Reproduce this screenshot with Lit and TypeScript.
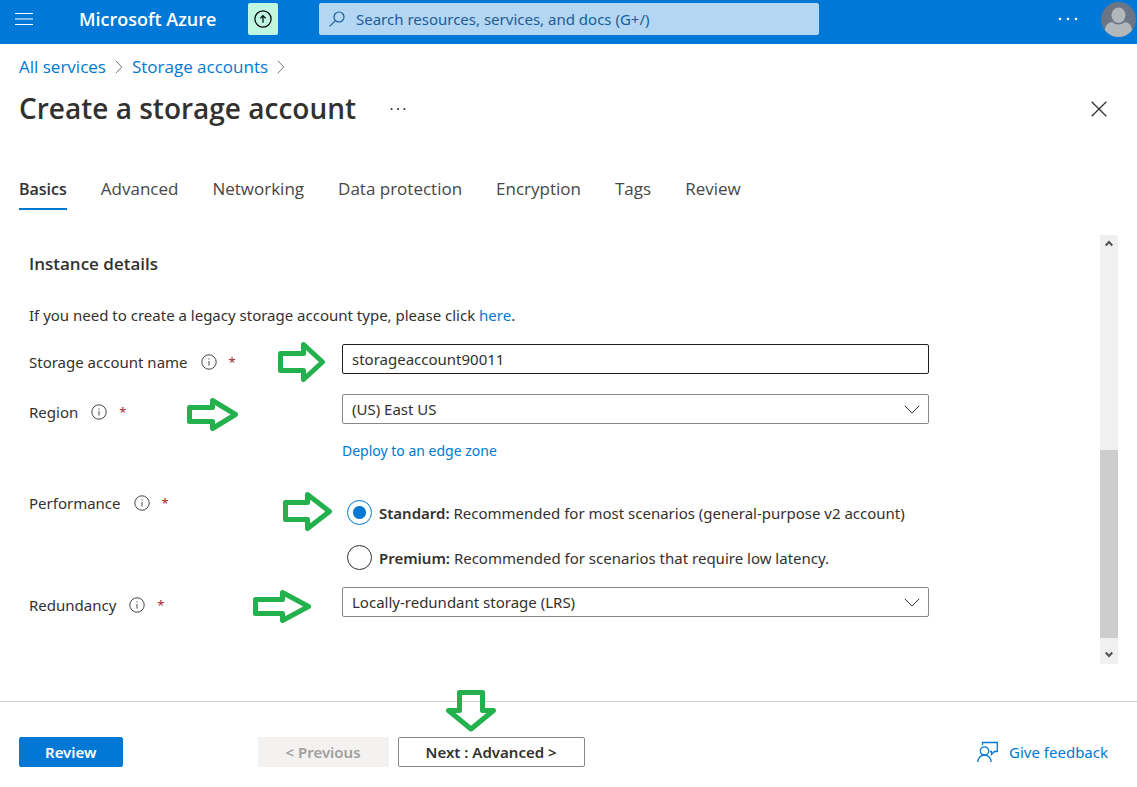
import { LitElement, html, css, svg } from "lit";
import { customElement, state } from "lit/decorators.js";
import { classMap } from "lit/directives/class-map.js";

const TABS = ["Basics", "Advanced", "Networking", "Data protection", "Encryption", "Tags", "Review"];

const crumbChevron = html`<svg class="crumb-chevron" viewBox="0 0 8 14" aria-hidden="true">
  <path d="M0.8 0.8 L6.8 7 L0.8 13.2" /></svg>`;

const selectChevron = html`<svg class="select-chevron" viewBox="0 0 16 9" aria-hidden="true">
  <path d="M0.8 0.8 L8 8 L15.2 0.8" /></svg>`;

const infoIcon = html`<svg class="info" viewBox="0 0 16 16" role="img" aria-label="Info">
  <circle cx="8" cy="8" r="7.2" /><path d="M8 7 V11.6" /><path d="M8 4.4 V5.6" /></svg>`;

const arrow = (name: string, width: number, height: number, points: string) => html`
  <svg class="arrow ${name}" width=${width} height=${height} viewBox="0 0 ${width} ${height}" aria-hidden="true">
    ${svg`<polygon points=${points} />`}
  </svg>`;

@customElement("app-root")
export class AppRoot extends LitElement {
  @state() private tab = "Basics";
  @state() private performance = "standard";

  static styles = css`
    :host {
      display: flex;
      flex-direction: column;
      min-height: 100vh;
      background: #fff;
      color: #323130;
      font-family: "Noto Sans", "Open Sans", sans-serif;
      font-size: 15px;
      line-height: 24px;
    }
    * { box-sizing: border-box; }
    button, input, select { font: inherit; color: inherit; margin: 0; }
    button { cursor: pointer; }
    a { color: #0078d4; text-decoration: none; }
    svg { display: block; flex: none; fill: none; stroke: currentColor; }
    .icon-button { display: flex; padding: 0; border: 0; background: none; }
    .brand, .crumbs, .title, .tabs, h2 { font-family: "Open Sans", "Noto Sans", sans-serif; }

    .topbar {
      display: flex;
      align-items: center;
      padding: 0 0 6px 15px;
      height: 44px;
      background: #0078d7;
      color: #fff;
    }
    .menu svg { width: 18px; height: 14px; }
    .brand { margin-left: 46px; width: 169px; color: #fff; font-size: 18px; font-weight: 600; white-space: nowrap; }
    .upgrade {
      align-items: center;
      justify-content: center;
      width: 30px;
      height: 32px;
      border-radius: 2px;
      background: #bff7e3;
      color: #000;
    }
    .upgrade svg { width: 18px; height: 18px; stroke-width: 1.2; }
    .search {
      display: flex;
      align-items: center;
      gap: 11px;
      flex: 0 1 500px;
      min-width: 0;
      height: 32px;
      margin-left: 41px;
      padding: 0 10px;
      border-radius: 2px;
      background: #b3d7f3;
      color: #1b5c97;
    }
    .search svg { width: 16px; height: 16px; stroke-width: 1.2; }
    .search input { flex: 1; min-width: 0; border: 0; padding: 0; background: none; outline: none; }
    .search input::placeholder { color: inherit; opacity: 1; }
    .topbar .more { margin-left: auto; }
    .more svg { width: 20px; height: 4px; fill: currentColor; stroke: none; }
    .avatar { margin: 1px 1px 0 23px; }
    .avatar svg { width: 35px; height: 35px; stroke: none; }

    .crumbs { display: flex; align-items: center; gap: 9px; padding: 11px 19px 0; font-size: 17px; }
    .crumb-chevron { width: 8px; height: 14px; color: #767676; }
    .title { display: flex; align-items: center; padding: 9px 30px 0 19px; }
    h1 { margin: 0; font-size: 28px; line-height: 40px; font-weight: 600; }
    .title .icon-button { padding-top: 2px; }
    .title .more { margin-left: 34px; }
    .title .more svg { width: 16px; }
    .title .close { margin-left: auto; }
    .close svg { width: 16px; height: 16px; stroke-width: 1.3; }

    .tabs { display: flex; gap: 34px; padding: 45px 19px 0; font-size: 17px; }
    .tab { padding: 4px 0 7px; border: 0; border-bottom: 2px solid transparent; background: none; color: #484644; white-space: nowrap; }
    .tab.active { border-color: #0078d4; color: #323130; font-size: 16px; font-weight: 600; }

    .pane { flex: 1; display: flex; margin: 25px 19px 37px 29px; }
    .form { flex: 1; min-width: 0; padding-top: 17px; }
    h2 { margin: 0 0 27px; font-size: 17px; line-height: 24px; font-weight: 600; }
    p { margin: 0 0 17px; }
    .row { position: relative; display: grid; grid-template-columns: 313px minmax(0, 587px); margin-bottom: 14px; }
    .label { display: flex; align-items: center; height: 36px; }
    .info { width: 16px; height: 16px; margin: 0 12px 0 13px; color: #484644; }
    .required { color: #a4262c; font-size: 13px; }
    .box { width: 100%; height: 30px; padding: 0 9px; border: 1px solid #8a8886; border-radius: 2px; background: #fff; color: #323130; }
    .name-box { border-color: #201f1e; }
    .select { position: relative; }
    .select select { appearance: none; display: block; }
    .select-chevron { position: absolute; right: 9px; top: 11px; width: 16px; height: 9px; pointer-events: none; }
    .edge { display: block; width: fit-content; margin-top: 15px; font-size: 14px; }
    .performance { margin-top: 22px; margin-bottom: 17px; }
    .options { display: grid; gap: 20px; padding: 15px 0 0 5px; }
    .option { display: flex; align-items: center; gap: 7px; min-height: 25px; }
    .option input { appearance: none; flex: none; width: 25px; height: 25px; border: 1px solid #323130; border-radius: 50%; background: #fff; }
    .option input:checked { border-color: #0078d4; background: radial-gradient(circle, #0078d4 6px, #fff 7px); }
    b { font-weight: 600; }

    .scrollbar { display: flex; flex-direction: column; width: 18px; background: #f0f0f0; color: #505050; }
    .scrollbar button { justify-content: center; height: 26px; padding-top: 5px; color: inherit; }
    .scrollbar .down { padding-top: 13px; }
    .scrollbar svg { width: 8px; height: 7px; stroke-width: 2; }
    .track { flex: 1; }
    .thumb { flex: 1; background: #cdcdcd; }

    .footer { position: relative; display: flex; align-items: center; padding: 35px 29px 20px 19px; border-top: 1px solid #d2d0ce; }
    .button { height: 30px; padding: 0 25px; border: 1px solid #8a8886; border-radius: 2px; background: #fff; font-weight: 600; line-height: 24px; white-space: nowrap; }
    .primary { border-color: #0078d4; background: #0078d4; color: #fff; }
    .step { padding: 0 27px; }
    .previous { margin-left: 135px; margin-right: 9px; border-color: #f3f2f1; background: #f3f2f1; color: #a19f9d; }
    .feedback { display: flex; align-items: center; gap: 10px; margin-left: auto; }
    .feedback svg { width: 22px; height: 22px; stroke-width: 1.3; }

    .arrow { position: absolute; stroke: #22b14c; stroke-width: 5; stroke-linejoin: round; pointer-events: none; z-index: 1; }
    .to-name { left: 249px; top: -2px; }
    .to-region { left: 158px; top: 4px; }
    .to-performance { left: 254px; top: 7px; }
    .to-redundancy { left: 224px; top: 3px; }
    .to-next { left: 445px; top: -13px; }
  `;

  private label(text: string, id: string) {
    return html`<div class="label"><label for=${id}>${text}</label>${infoIcon}<span class="required">*</span></div>`;
  }

  private option(value: string, name: string, note: string) {
    return html`<label class="option">
      <input type="radio" name="performance" id=${value} .checked=${this.performance === value}
        @change=${() => (this.performance = value)} />
      <span><b>${name}:</b> ${note}</span>
    </label>`;
  }

  private dots() {
    return html`<svg viewBox="0 0 20 4" aria-hidden="true">
      <circle cx="2" cy="2" r="1.3" /><circle cx="10" cy="2" r="1.3" /><circle cx="18" cy="2" r="1.3" /></svg>`;
  }

  render() {
    return html`
      <header class="topbar">
        <button class="icon-button menu" aria-label="Menu">
          <svg viewBox="0 0 18 14" stroke="#fff"><path d="M0 1.5H18M0 7H18M0 12.5H18" /></svg>
        </button>
        <a class="brand" href="#">Microsoft Azure</a>
        <button class="icon-button upgrade" aria-label="Upgrade">
          <svg viewBox="0 0 18 18"><circle cx="9" cy="9" r="8.1" /><path d="M9 12.800V6M6.300 8.400L9 5.700L11.700 8.400" /></svg>
        </button>
        <label class="search">
          <svg viewBox="0 0 16 16" aria-hidden="true"><circle cx="10" cy="6" r="5" /><path d="M6.4 9.6L0.6 15.4" /></svg>
          <input type="search" aria-label="Search" placeholder="Search resources, services, and docs (G+/)" />
        </label>
        <button class="icon-button more" aria-label="More">${this.dots()}</button>
        <button class="icon-button avatar" aria-label="Account">
          <svg viewBox="0 0 35 35">
            <clipPath id="disc"><circle cx="17.5" cy="17.5" r="17.5" /></clipPath>
            <g clip-path="url(#disc)">
              <rect width="35" height="35" fill="#6b7585" />
              <path d="M4 36V27Q5 21 11 20Q17.500 25 24 20Q30 21 31 27V36Z" fill="#b1b7bb" />
              <ellipse cx="17.500" cy="13.300" rx="7" ry="7.700" fill="#b1b7bb" />
            </g>
          </svg>
        </button>
      </header>

      <nav class="crumbs" aria-label="Breadcrumb">
        <a href="#">All services</a>${crumbChevron}<a href="#">Storage accounts</a>${crumbChevron}
      </nav>

      <div class="title">
        <h1>Create a storage account</h1>
        <button class="icon-button more" aria-label="More actions">${this.dots()}</button>
        <button class="icon-button close" aria-label="Close">
          <svg viewBox="0 0 16 16"><path d="M0.7 0.7L15.3 15.3M15.3 0.7L0.7 15.3" /></svg>
        </button>
      </div>

      <div class="tabs" role="tablist">
        ${TABS.map((t) => html`<button role="tab" aria-selected=${t === this.tab}
          class=${classMap({ tab: true, active: t === this.tab })} @click=${() => (this.tab = t)}>${t}</button>`)}
      </div>

      <main class="pane">
        <div class="form">
          <h2>Instance details</h2>
          <p>If you need to create a legacy storage account type, please click <a href="#">here</a>.</p>

          <div class="row">
            ${this.label("Storage account name", "name")}
            <input class="box name-box" id="name" type="text" value="storageaccount90011" />
            ${arrow("to-name", 48, 42, "2.5,11.500 25.500,11.500 25.500,2.500 44.500,20 25.500,37.500 25.500,28.500 2.500,28.500")}
          </div>

          <div class="row">
            ${this.label("Region", "region")}
            <div>
              <div class="select">
                <select class="box" id="region"><option>(US) East US</option></select>${selectChevron}
              </div>
              <a class="edge" href="#">Deploy to an edge zone</a>
            </div>
            ${arrow("to-region", 52, 34, "2.500,9.500 25.500,9.500 25.500,2.500 48.500,16.500 25.500,30.500 25.500,23.500 2.500,23.500")}
          </div>

          <div class="row performance">
            ${this.label("Performance", "standard")}
            <div class="options" role="radiogroup" aria-label="Performance">
              ${this.option("standard", "Standard", "Recommended for most scenarios (general-purpose v2 account)")}
              ${this.option("premium", "Premium", "Recommended for scenarios that require low latency.")}
            </div>
            ${arrow("to-performance", 50, 40, "2.500,10.500 24.500,10.500 24.500,2.500 46.500,19.500 24.500,36.500 24.500,27.500 2.500,27.500")}
          </div>

          <div class="row">
            ${this.label("Redundancy", "redundancy")}
            <div class="select">
              <select class="box" id="redundancy"><option>Locally-redundant storage (LRS)</option></select>${selectChevron}
            </div>
            ${arrow("to-redundancy", 60, 34, "2.500,9.500 29.500,9.500 29.500,2.500 55.500,16.500 29.500,30.500 29.500,23.500 2.500,23.500")}
          </div>
        </div>

        <div class="scrollbar">
          <button class="icon-button" aria-label="Scroll up"><svg viewBox="0 0 8 7"><path d="M0.700 5.500L4 2L7.300 5.500" /></svg></button>
          <div class="track"></div>
          <div class="thumb"></div>
          <button class="icon-button down" aria-label="Scroll down"><svg viewBox="0 0 8 7"><path d="M0.700 1.500L4 5L7.300 1.500" /></svg></button>
        </div>
      </main>

      <footer class="footer">
        <button class="button primary">Review</button>
        <button class="button step previous" disabled>&lt; Previous</button>
        <button class="button step">Next : Advanced &gt;</button>
        <a class="feedback" href="#">
          <svg viewBox="0 0 22 22" aria-hidden="true">
            <circle cx="7.500" cy="10" r="4.200" /><path d="M0.800 21Q1.500 14.500 7.500 14.200Q13.500 14.500 14.200 21" />
            <path d="M5.500 4V1.500H20.300V10.500H17.500L14.500 13.500V10.500H13" />
          </svg>
          Give feedback
        </a>
        ${arrow("to-next", 52, 43, "14.500,3.500 37.500,3.500 37.500,21.500 48.500,21.500 26,40 3.500,21.500 14.500,21.500")}
      </footer>
    `;
  }
}
